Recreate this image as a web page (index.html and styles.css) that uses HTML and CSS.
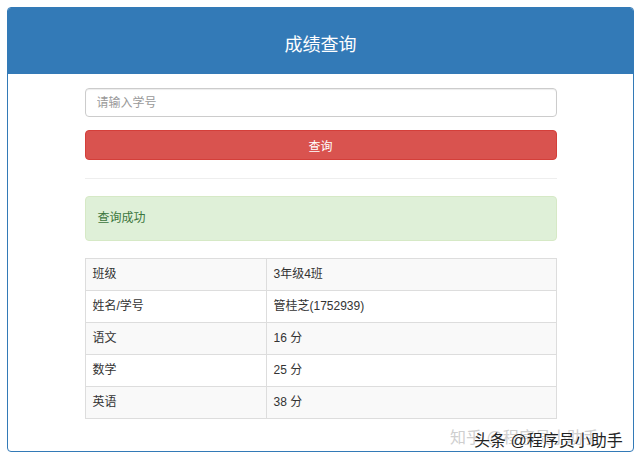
FILE: index.html
```html
<!DOCTYPE html>
<html lang="zh-CN">
<head>
    <meta charset="UTF-8">
    <meta name="viewport" content="width=device-width, initial-scale=1.0">
    <title>成绩查询</title>
    <link rel="stylesheet" href="styles.css">
</head>
<body>
    <div class="panel">
        <div class="panel-heading">成绩查询</div>
        <div class="panel-body">
            <input type="text" class="form-control" placeholder="请输入学号">
            <button class="btn-query">查询</button>
            <hr class="divider">
            <div class="alert-success">查询成功</div>
            <table class="score-table">
                <tr><td>班级</td><td>3年级4班</td></tr>
                <tr><td>姓名/学号</td><td>管桂芝(1752939)</td></tr>
                <tr><td>语文</td><td>16 分</td></tr>
                <tr><td>数学</td><td>25 分</td></tr>
                <tr><td>英语</td><td>38 分</td></tr>
            </table>
        </div>
        <div class="watermark">
            <span class="wm-light">知乎 @程序员小助手</span>
            <span class="wm-dark">头条 @程序员小助手</span>
        </div>
    </div>
</body>
</html>
```

FILE: styles.css
```css
body {
    margin: 0;
    background: #fff;
    font-family: "Liberation Sans", "Noto Sans CJK SC", sans-serif;
    font-size: 12px;
    color: #333;
}
.panel {
    position: relative;
    box-sizing: border-box;
    width: 627px;
    height: 445px;
    margin: 7px 0 0 7px;
    border: 1px solid #337ab7;
    border-radius: 4px;
    background: #fff;
    overflow: hidden;
}
.panel-heading {
    box-sizing: border-box;
    height: 66px;
    padding-top: 24px;
    background: #337ab7;
    color: #fff;
    font-size: 18px;
    line-height: 26px;
    text-align: center;
}
.panel-body {
    width: 472px;
    margin: 0 auto;
    padding-top: 14px;
}
.form-control {
    display: block;
    box-sizing: border-box;
    width: 100%;
    height: 29px;
    padding: 0 11px;
    border: 1px solid #ccc;
    border-radius: 4px;
    box-shadow: inset 0 1px 1px rgba(0, 0, 0, 0.075);
    font-family: inherit;
    font-size: 12px;
    color: #555;
    outline: none;
}
.form-control::placeholder {
    color: #999;
}
.btn-query {
    display: block;
    box-sizing: border-box;
    width: 100%;
    height: 30px;
    margin-top: 13px;
    border: 1px solid #d43f3a;
    border-radius: 4px;
    background: #d9534f;
    color: #fff;
    font-family: inherit;
    font-size: 12px;
    cursor: pointer;
}
.divider {
    margin: 18px 0 17px;
    border: 0;
    border-top: 1px solid #eee;
}
.alert-success {
    box-sizing: border-box;
    height: 45px;
    padding: 0 12px;
    line-height: 43px;
    background: #dff0d8;
    border: 1px solid #d6e9c6;
    border-radius: 4px;
    color: #3c763d;
}
.score-table {
    width: 100%;
    margin-top: 17px;
    border-collapse: collapse;
}
.score-table td {
    padding: 7px 7px;
    line-height: 17px;
    border: 1px solid #ddd;
    color: #333;
}
.score-table td:first-child {
    width: 166px;
}
.score-table tr:nth-child(odd) {
    background: #f9f9f9;
}
.watermark {
    position: absolute;
    right: 8px;
    bottom: 3px;
    width: 175px;
    height: 24px;
    font-size: 16px;
}
.wm-light {
    position: absolute;
    left: 0;
    top: 0;
    color: #cfcfcf;
    white-space: nowrap;
}
.wm-dark {
    position: absolute;
    left: 24px;
    top: 3px;
    color: #222;
    white-space: nowrap;
    text-shadow: 0 0 2px #fff;
}
```
